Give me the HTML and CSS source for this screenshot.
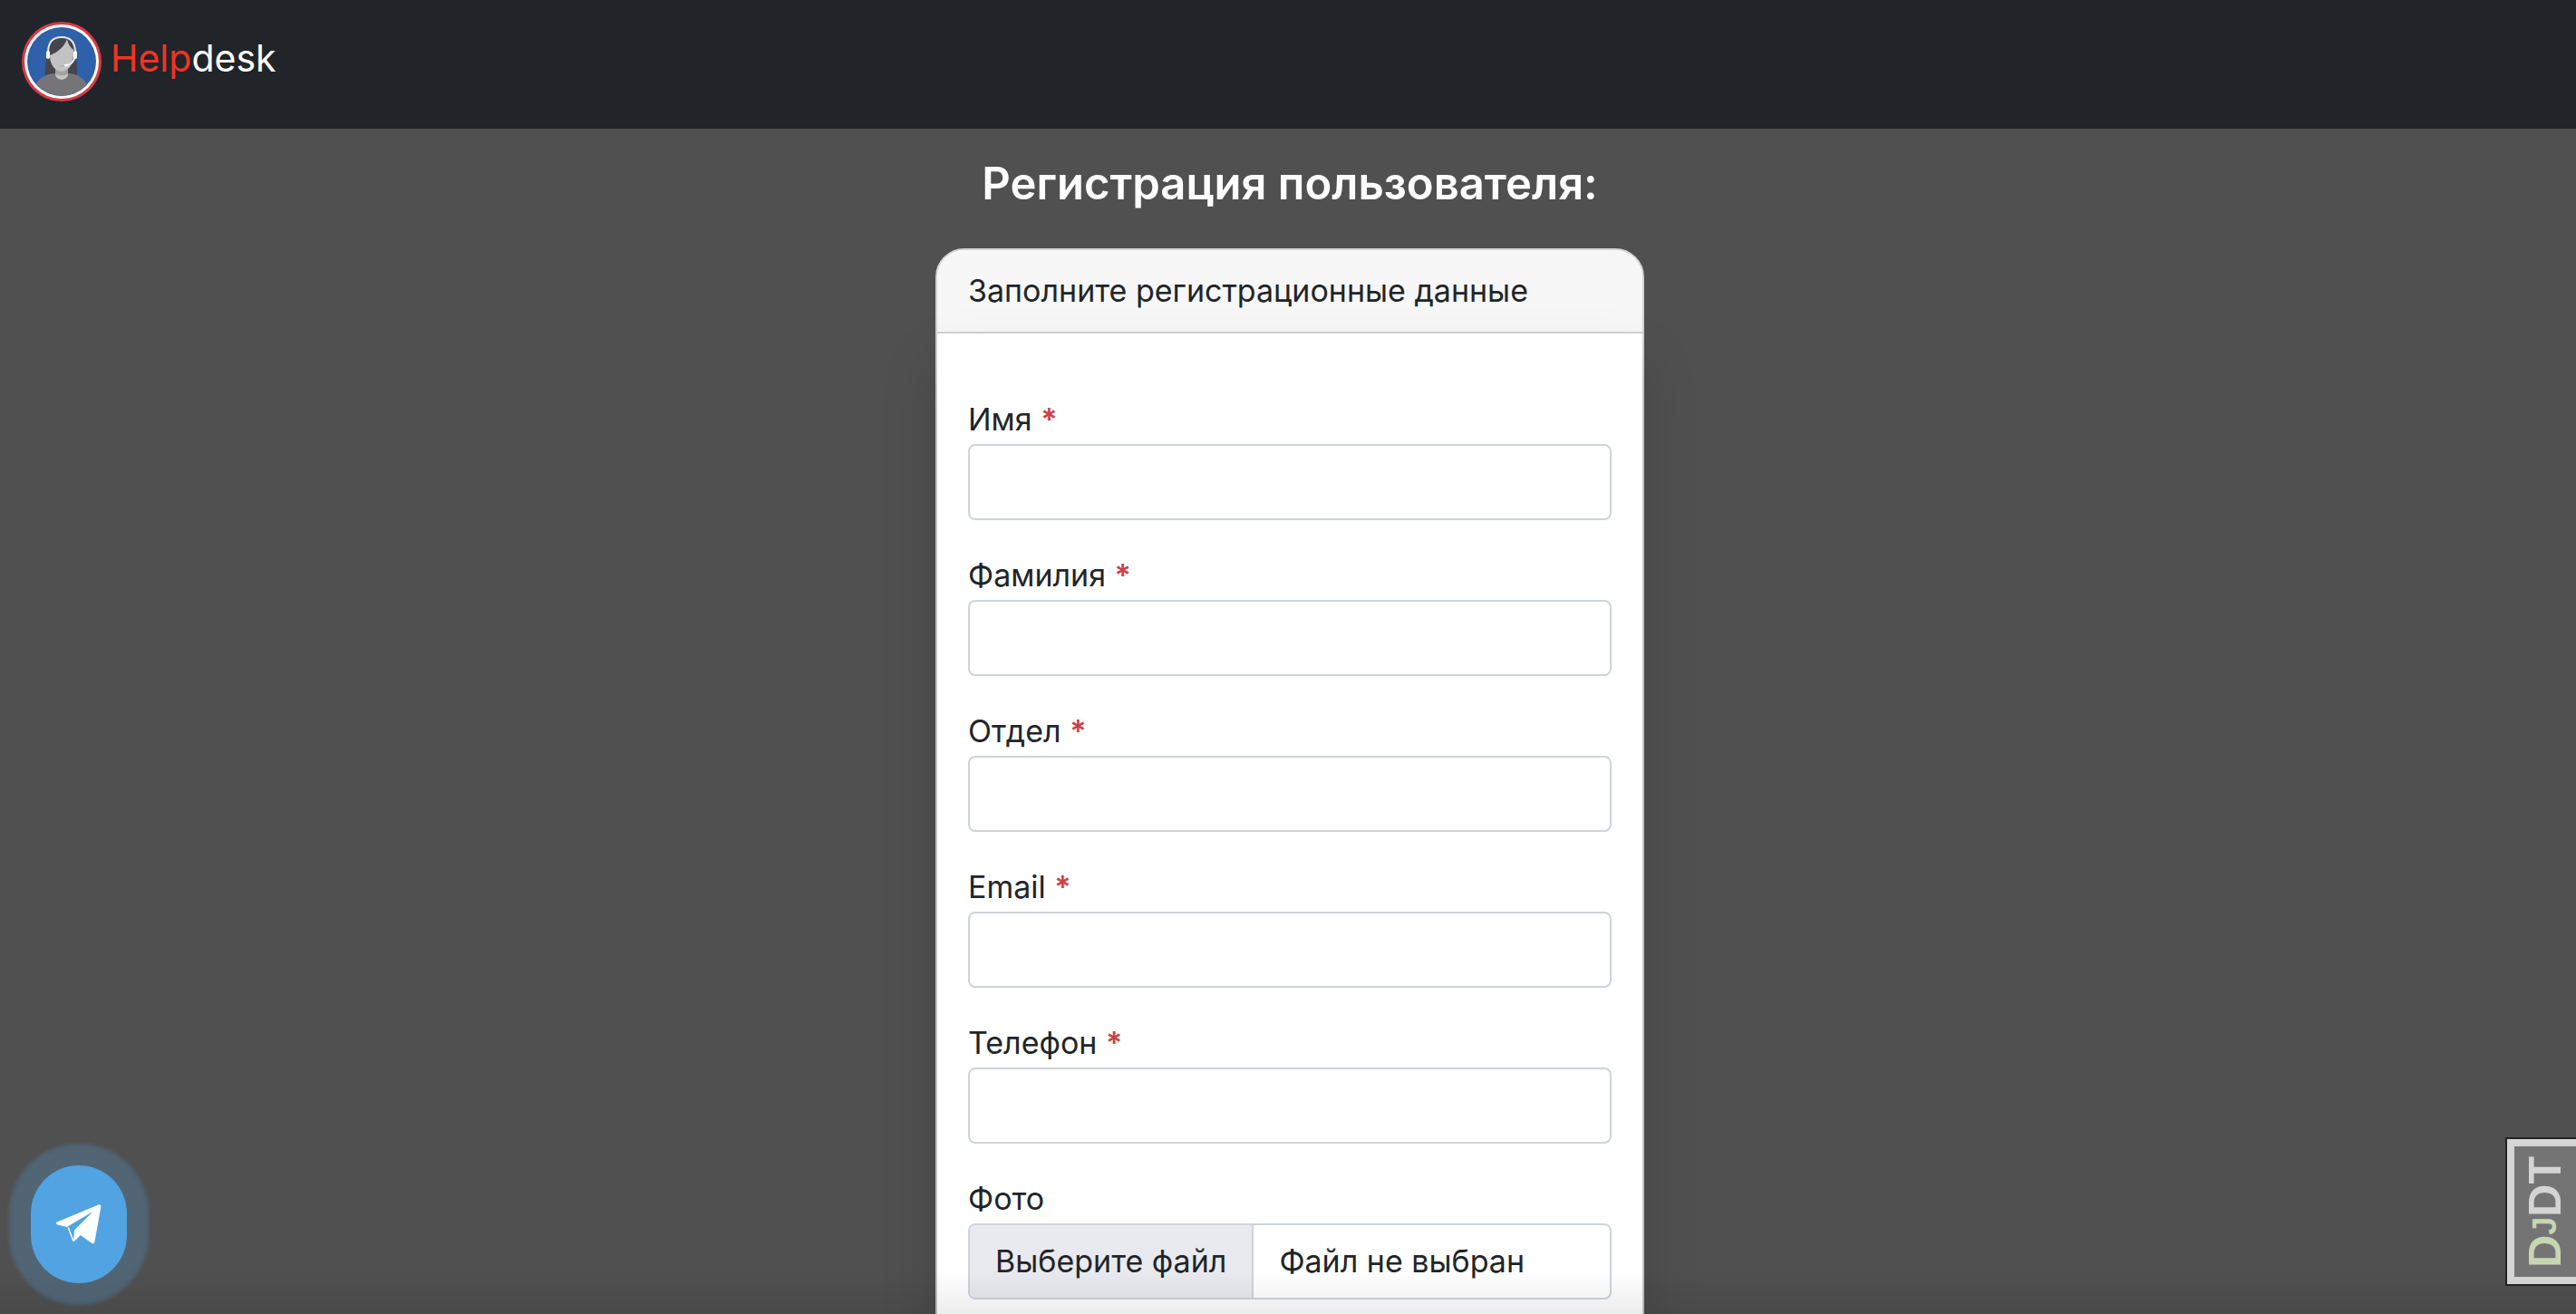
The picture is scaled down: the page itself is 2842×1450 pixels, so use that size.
FILE: index.html
```html
<!DOCTYPE html>
<html lang="ru">
<head>
<meta charset="utf-8">
<meta name="viewport" content="width=device-width, initial-scale=1">
<title>Helpdesk</title>
<link rel="stylesheet" href="styles.css">
</head>
<body>
<header class="navbar">
  <a class="brand" href="#">
    <svg class="brand-logo" viewBox="0 0 88 88" aria-hidden="true">
      <defs><clipPath id="face"><circle cx="44" cy="44" r="38"/></clipPath></defs>
      <circle cx="44" cy="44" r="44" fill="#d63a46"/>
      <circle cx="44" cy="44" r="41" fill="#fff"/>
      <circle cx="44" cy="44" r="38" fill="#2f60aa"/>
      <g clip-path="url(#face)">
        <path d="M29 30C30 20 36 17 44 17s14 3 15 13c0 10 3 16 2 30H26c-1-14 2-20 3-30z" fill="#45454d"/>
        <path d="M14 73c3-11 14-16 23-16h14c10 0 19 6 22 15-6 12-18 16-29 16s-24-5-30-15z" fill="#757577"/>
        <path d="M37 50h14v8c0 7-14 7-14 0z" fill="#a2a2a4"/>
        <path d="M37 57c2 3 12 3 14 0 0 9-14 9-14 0z" fill="#c3c3c5"/>
        <path d="M31 37c10-4 16-10 19-18 1 5 3 9 7 12 1 14-4 23-13 24-8-1-13-8-13-18z" fill="#c2c2c4"/>
        <path d="M29 34c0-12 6-17 15-17s15 5 15 17" fill="none" stroke="#e6e6e8" stroke-width="2"/>
        <path d="M58 40c0 4-4 7-8 8" fill="none" stroke="#f2f2f2" stroke-width="2"/>
        <path d="M41 49h6" stroke="#aaa" stroke-width="1"/>
        <ellipse cx="49" cy="48" rx="2" ry="1.5" fill="#fff"/>
        <rect x="27" y="32" width="4" height="9" rx="2" fill="#fff"/>
        <rect x="57" y="32" width="4" height="9" rx="2" fill="#fff"/>
      </g>
    </svg>
    <span class="brand-name"><span class="brand-accent">Help</span>desk</span>
  </a>
</header>

<main class="page">
  <h1 class="page-title">Регистрация пользователя:</h1>
  <section class="card">
    <div class="card-header">Заполните регистрационные данные</div>
    <form class="card-body">
      <div class="field">
        <label for="first-name">Имя <span class="required">*</span></label>
        <input class="control" id="first-name" type="text" required>
      </div>
      <div class="field">
        <label for="last-name">Фамилия <span class="required">*</span></label>
        <input class="control" id="last-name" type="text" required>
      </div>
      <div class="field">
        <label for="department">Отдел <span class="required">*</span></label>
        <input class="control" id="department" type="text" required>
      </div>
      <div class="field">
        <label for="email">Email <span class="required">*</span></label>
        <input class="control" id="email" type="email" required>
      </div>
      <div class="field">
        <label for="phone">Телефон <span class="required">*</span></label>
        <input class="control" id="phone" type="tel" required>
      </div>
      <div class="field">
        <label for="photo">Фото</label>
        <input class="file-input" id="photo" type="file">
        <label class="control file" for="photo">
          <span class="file-button">Выберите файл</span>
          <span class="file-name">Файл не выбран</span>
        </label>
      </div>
    </form>
  </section>
</main>

<div class="bottom-shade"></div>

<a class="telegram" href="#" aria-label="Telegram">
  <svg class="telegram-icon" viewBox="0 0 50 44" aria-hidden="true">
    <path fill="#fff" d="M1.500 19.300 46.500.6C48.600-.2 49.600 1 49.300 3L42.500 41c-.4 2.400-2 2.900-3.800 1.600L26.800 34l-6 6c-.8.8-1.800.9-2 .2L13.200 25.600 1.500 22.400C-.4 21.800-.5 20.200 1.500 19.300z"/>
    <path d="M12.500 24.500 40.500 8 20 28.500 19.200 40 13 25.600z" fill="#52a3e2"/>
    <path d="M13.300 25.600 19 40.500" stroke="#fff" stroke-width="1.400" fill="none"/>
  </svg>
</a>

<button class="debug-handle" type="button"><span class="debug-text"><span class="debug-accent">D<small>J</small></span>DT</span></button>
</body>
</html>
```
FILE: styles.css
```css
* { box-sizing: border-box; }

body {
  margin: 0;
  height: 100vh;
  display: flex;
  flex-direction: column;
  overflow: hidden;
  background: #505050;
  color: #212529;
  font-family: Inter, "Liberation Sans", sans-serif;
  font-size: 34px;
  line-height: 54px;
}

.navbar {
  flex: none;
  display: flex;
  padding: 24px 24px 30px;
  background: #212529;
}

.brand {
  display: flex;
  align-items: flex-start;
  gap: 10px;
  color: #fff;
  text-decoration: none;
}

.brand-logo { width: 88px; height: 88px; }
.brand-name { font-size: 41px; line-height: 80px; }
.brand-accent { color: #ee3524; }

.page {
  flex: 1;
  min-height: 0;
  padding: 30px 24px 40px 28px;
  overflow-y: auto;
  scrollbar-width: none;
}

.page-title {
  margin: 0 0 40px;
  color: #fff;
  font-size: 49px;
  font-weight: 600;
  line-height: 62px;
  text-align: center;
}

.card {
  width: 100%;
  max-width: 782px;
  margin: 0 auto;
  background: #fff;
  border: 2px solid #d2d2d2;
  border-radius: 32px;
}

.card-header {
  padding: 18px 34px;
  background: #f7f7f7;
  border-bottom: 2px solid #d2d2d2;
  border-radius: 30px 30px 0 0;
}

.card-body {
  display: flex;
  flex-direction: column;
  gap: 34px;
  padding: 68px 34px;
  border-radius: 0 0 30px 30px;
  box-shadow: 0 32px 64px rgba(0, 0, 0, .15);
}

.field {
  position: relative;
  display: flex;
  flex-direction: column;
}

.required {
  color: #cd4047;
  font-weight: 600;
}

.control {
  width: 100%;
  height: 84px;
  padding: 12px 24px;
  background: #fff;
  border: 2px solid #ced4da;
  border-radius: 8px;
  color: inherit;
  font: inherit;
}

.file-input {
  position: absolute;
  width: 1px;
  height: 1px;
  opacity: 0;
}

.file {
  display: flex;
  padding: 0;
  overflow: hidden;
}

.file-button,
.file-name { padding: 13px 28px; }

.file-button {
  background: #e9eaef;
  border-right: 2px solid #ced4da;
}

.bottom-shade {
  position: fixed;
  inset: auto 0 0;
  height: 48px;
  background: linear-gradient(transparent, rgba(0, 0, 0, .07));
  pointer-events: none;
}

.telegram {
  position: fixed;
  left: 34px;
  bottom: 34px;
  width: 106px;
  height: 130px;
  display: flex;
  align-items: center;
  justify-content: center;
  background: #52a3e2;
  border-radius: 53px;
  box-shadow: 0 0 4px 24px rgba(82, 163, 226, .25);
}

.telegram-icon { width: 50px; height: 44px; }

.debug-handle {
  position: fixed;
  right: 0;
  bottom: 33px;
  width: 76px;
  height: 160px;
  display: flex;
  align-items: center;
  justify-content: center;
  padding: 0;
  background: #747474;
  border: 8px solid #d4d4d4;
  border-right: 0;
  outline: 2px solid #222;
  color: #d4d4d4;
  font: bold 50px/60px "Liberation Sans", sans-serif;
}

.debug-text {
  writing-mode: vertical-rl;
  transform: rotate(180deg);
}

.debug-accent { color: #c6d6b2; }
.debug-accent small { font-size: 36px; }
```
